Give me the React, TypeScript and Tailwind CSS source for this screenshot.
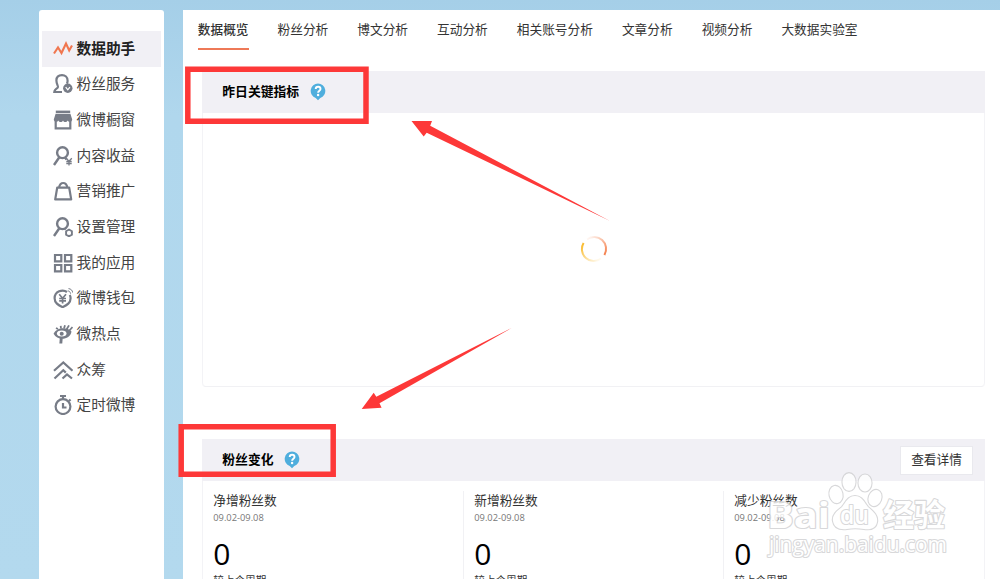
import type { ReactNode } from "react";
import { clsx } from "clsx";

const menu: { label: string; icon: ReactNode }[] = [
  {
    label: "数据助手",
    icon: <path d="M1 14.5 5 8.5l3.5 5.5L13 4.5l3.2 7L19 6.500" stroke="#f0764f" strokeWidth="2.1" />,
  },
  {
    label: "粉丝服务",
    icon: (
      <>
        <path d="M9 18H1.300c.2-2.300 1.600-3.300 3.500-4.400C6 12.800 3.400 10.500 3.400 6.600c0-3.600 2.500-5.400 5.600-5.400s5.600 1.900 5.600 5.500c0 1.100-.2 2-.7 2.900" />
        <circle cx="14.800" cy="14.300" r="4.700" fill="#777c87" stroke="none" />
        <path d="m12.700 13.200 2.100 2.600 2.100-2.600" stroke="#fff" strokeWidth="1.3" />
      </>
    ),
  },
  {
    label: "微博橱窗",
    icon: (
      <>
        <path d="M2.800 1.800h14.400" strokeWidth="2.400" />
        <path d="M2.600 3.800h14.800l1.800 5.700c0 2.600-3.700 3.100-4.600 1-.9 2-3.700 2-4.600 0-.9 2-3.700 2-4.600 0-.9 2-4.600 1.600-4.600-1z" fill="#777c87" stroke="none" />
        <path d="M2.700 11v7.400h14.600V11" />
      </>
    ),
  },
  {
    label: "内容收益",
    icon: (
      <>
        <circle cx="9.500" cy="6.700" r="5.400" strokeWidth="2.400" />
        <path d="m6.500 11-5.500 8M12 11.500l1.500 2" strokeWidth="2.400" />
        <path d="m13.200 12.300 2.800 3 2.800-3M16 15.300v4.200M13.300 15.500h5.400M13.300 17.500h5.400" strokeWidth="1.3" />
      </>
    ),
  },
  {
    label: "营销推广",
    icon: <path d="M4.200 6.700h12l2 11.700H2.200zM6 6.500c.7-3.200 2.200-4.500 4.200-4.500s3.500 1.300 4.200 4.500" strokeLinejoin="round" />,
  },
  {
    label: "设置管理",
    icon: (
      <>
        <circle cx="9.500" cy="6.700" r="5.400" strokeWidth="2.400" />
        <path d="m6.500 11-5.500 8M12 11.500l.8 1" strokeWidth="2.400" />
        <path d="m16 12.500 2.900 1.700v3.400L16 19.300l-2.900-1.700v-3.400z" strokeWidth="1.900" />
      </>
    ),
  },
  {
    label: "我的应用",
    icon: <path d="M2 2h6.300v6.300H2zM12 2h6.300v6.300H12zM2 12h6.300v6.300H2zM12 12h6.300v6.300H12z" />,
  },
  {
    label: "微博钱包",
    icon: (
      <>
        <path d="M14 4C9.500.7 1.600 3.500 1.600 10.300c0 4.600 3.500 6.600 8 8.900 4.500-2.300 8-4.300 8-8.900 0-1.300-.3-2.400-.9-3.300" />
        <path d="m6.200 6.300 3.400 3.900 3.400-3.900M9.600 10.200v5.200M6.200 10.500H13M6.200 12.800H13" strokeWidth="1.700" />
        <path d="M14.800 2.800c1.600.3 2.600 1.300 2.800 2.900M15.500.6c2.500.3 3.900 1.700 4.200 4" strokeWidth="1" />
      </>
    ),
  },
  {
    label: "微热点",
    icon: (
      <>
        <path d="M.600 9.800C3.500 3.500 13.500 2.600 18.500 7.500 17 16.200 4.500 17.300.600 9.800z" fill="#777c87" stroke="none" />
        <ellipse cx="8.700" cy="9.500" rx="4.800" ry="3" fill="#fff" stroke="none" />
        <circle cx="8.700" cy="9.700" r="2" fill="#777c87" stroke="none" />
        <path d="M5 5 3 4M8 4.500l-.3-2.700M11 4.500l1-3.300M13.500 5.500l2.500-4.100M16 7l3.500-4" strokeWidth="1.800" />
        <path d="M8.300 13.500 7.800 19.500" strokeWidth="2.900" />
      </>
    ),
  },
  {
    label: "众筹",
    icon: <path d="m1 10.800 9.300-8.300 9.200 8.300M1.500 18.500l8.800-8.200 2.500 2.300M9.500 18.500l4.500-4 5 4" />,
  },
  {
    label: "定时微博",
    icon: (
      <>
        <circle cx="10" cy="11.600" r="7.400" />
        <path d="M7 1h6M10 1v3M16 4.500l1.500 1.500M10 8v4.500h3.500" />
      </>
    ),
  },
];

const tabs = ["数据概览", "粉丝分析", "博文分析", "互动分析", "相关账号分析", "文章分析", "视频分析", "大数据实验室"];

const stats = ["净增粉丝数", "新增粉丝数", "减少粉丝数"];

function HelpPin() {
  return (
    <svg width="16" height="18" viewBox="0 0 16 18">
      <path d="M8 .500a7.400 7.400 0 0 1 2.300 14.400L8 17.200l-2.300-2.300A7.400 7.400 0 0 1 8 .500z" fill="#4faedd" />
      <path d="M5.700 6c.1-3 4.800-3 4.800 0 0 1.700-2.400 1.700-2.400 3.700" fill="none" stroke="#fff" strokeWidth="1.900" />
      <circle cx="8.100" cy="12" r="1.200" fill="#fff" />
    </svg>
  );
}

function PanelHeader({ title, children }: { title: string; children?: ReactNode }) {
  return (
    <div className="flex h-[42px] shrink-0 items-center bg-[#f1f0f5] pr-[12px] pl-5">
      <h2 className="mr-[10.500px] pb-[2px] text-[12.8px] font-bold text-black">{title}</h2>
      <HelpPin />
      {children}
    </div>
  );
}

function Sidebar() {
  return (
    <aside className="ml-[38.500px] w-[125.300px] shrink-0 rounded-t-[3px] bg-white px-[3px] pt-[21px]">
      {menu.map(({ label, icon }, i) => (
        <div
          key={label}
          className={clsx(
            "flex h-[35.670px] items-center pl-[11px] text-[14.7px]",
            i === 0 ? "bg-[#f1f0f5] font-bold text-[#222]" : "text-[#444]",
          )}
        >
          <svg className="mr-1 shrink-0" width="20" height="20" viewBox="0 0 20 20" fill="none" stroke="#777c87" strokeWidth="2.200">
            {icon}
          </svg>
          <span className="pb-[2px]">{label}</span>
        </div>
      ))}
    </aside>
  );
}

function Spinner() {
  return (
    <svg width="28" height="28" viewBox="0 0 28 28" fill="none" strokeWidth="2">
      <defs>
        <linearGradient id="warm" x1="0" y1="0" x2="1" y2="1">
          <stop offset="0" stopColor="#f47b45" stopOpacity="0" />
          <stop offset="1" stopColor="#f47b45" />
        </linearGradient>
        <linearGradient id="gold" x1="0" y1="0" x2="1" y2="1">
          <stop offset="0" stopColor="#f9b824" />
          <stop offset="1" stopColor="#f9b824" stopOpacity="0" />
        </linearGradient>
      </defs>
      <path d="M7 4.200A12 12 0 0 1 24.400 20" stroke="url(#warm)" />
      <path d="M3.600 8A12 12 0 0 0 21 23.800" stroke="url(#gold)" />
    </svg>
  );
}

function Annotations() {
  return (
    <svg className="pointer-events-none absolute inset-0" width="1000" height="579" viewBox="0 0 1000 579">
      <g fill="none" stroke="#fd3838" strokeWidth="5.500">
        <path d="M187.800 69.300h178.200v51.900H187.800z" />
        <path d="M181.200 426.700h152v47.600H181.200z" />
      </g>
      <g fill="#fd3838">
        <path d="M411.500 121 432 121l-1.800 4.700L610 220.900 426.700 132.700 423.700 136.500z" />
        <path d="M361.700 408.900 373.700 392.800l2.600 3.900L512 327.800 379.500 403.300l2.100 4.500z" />
      </g>
    </svg>
  );
}

function Watermark() {
  return (
    <svg
      className="pointer-events-none absolute right-[50px] bottom-[16px]"
      width="186"
      height="93"
      viewBox="764 470 186 93"
      fill="#fff"
      stroke="#cfcfd1"
      strokeWidth="2.200"
      strokeLinejoin="round"
      paintOrder="stroke"
      opacity=".8"
      fontFamily="'Open Sans', 'Noto Sans CJK SC', sans-serif"
    >
      <text x="767" y="528" fontSize="36" fontWeight="700" textLength="63" lengthAdjust="spacingAndGlyphs">Bai</text>
      <ellipse cx="849" cy="482" rx="6.500" ry="8.800" />
      <ellipse cx="865" cy="483" rx="6.500" ry="8.500" />
      <ellipse cx="836" cy="494.500" rx="6.500" ry="8.600" transform="rotate(-12 836 494.500)" />
      <ellipse cx="875" cy="498" rx="6.300" ry="8.300" transform="rotate(20 875 498)" />
      <path d="M855 496c7 0 9 6 13 11 6 5 10 9 9 15-1 6-6 8-13 7-6-1-12-1-17 0-8 1-13-2-14-8-1-6 4-10 9-14 4-5 6-11 13-11z" />
      <text x="840" y="524" fontSize="25" fontWeight="600" textLength="29" lengthAdjust="spacingAndGlyphs">du</text>
      <text x="883" y="525.500" fontSize="31" fontWeight="700" textLength="62" lengthAdjust="spacingAndGlyphs">经验</text>
      <text x="769" y="552" fontSize="21" textLength="178" lengthAdjust="spacingAndGlyphs">jingyan.baidu.com</text>
    </svg>
  );
}

export default function App() {
  return (
    <div className="relative flex h-[579px] w-[1000px] overflow-hidden bg-linear-to-b from-[#a5cfe8] via-[#b0d7ed] via-20% to-[#b3d9ee] pt-[10px] font-['Noto_Sans_CJK_SC',sans-serif] whitespace-nowrap">
      <Sidebar />

      <main className="ml-[19.500px] flex min-w-0 flex-1 flex-col bg-white pr-[15px] pl-[19px]">
        <nav className="-ml-[4.500px] flex h-[61px] shrink-0 items-start gap-[29px] text-[12.7px] leading-[38px] text-[#333]">
          {tabs.map((tab, i) => (
            <div key={tab} className={clsx("h-10", i === 0 && "border-b-[2.500px] border-[#ee7957] font-medium")}>
              {tab}
            </div>
          ))}
        </nav>

        <section className="flex h-[315.500px] shrink-0 flex-col rounded-b-[4px] border-b border-[#f1f1f4]">
          <PanelHeader title="昨日关键指标" />
          <div className="flex flex-1 items-center justify-center rounded-b-[4px] border-x border-[#f3f3f6]">
            <Spinner />
          </div>
        </section>

        <section className="mt-[52.500px] shrink-0">
          <PanelHeader title="粉丝变化">
            <button className="ml-auto h-[29px] w-[73px] border border-[#e9e9ee] bg-white pb-[2px] text-[12.7px] text-[#333]">查看详情</button>
          </PanelHeader>
          <div className="grid grid-cols-[261px_260px_1fr] border-x border-[#f3f3f6] pt-[10px]">
            {stats.map((label, i) => (
              <div key={label} className={clsx("h-[120px] pl-[10px]", i < 2 && "border-r border-[#f1f1f4]")}>
                <p className="-mt-px text-[12.7px] leading-[19px] text-[#333]">{label}</p>
                <p className="mt-px font-['Open_Sans',sans-serif] text-[9.300px] leading-[16px] text-[#777]">09.02-09.08</p>
                <p className="mt-[9px] font-['Open_Sans',sans-serif] text-[30px] leading-[38px] text-black">0</p>
                <p className="text-[10.6px] leading-[14px] text-[#333]">较上个周期</p>
              </div>
            ))}
          </div>
        </section>
      </main>

      <Annotations />
      <Watermark />
    </div>
  );
}
